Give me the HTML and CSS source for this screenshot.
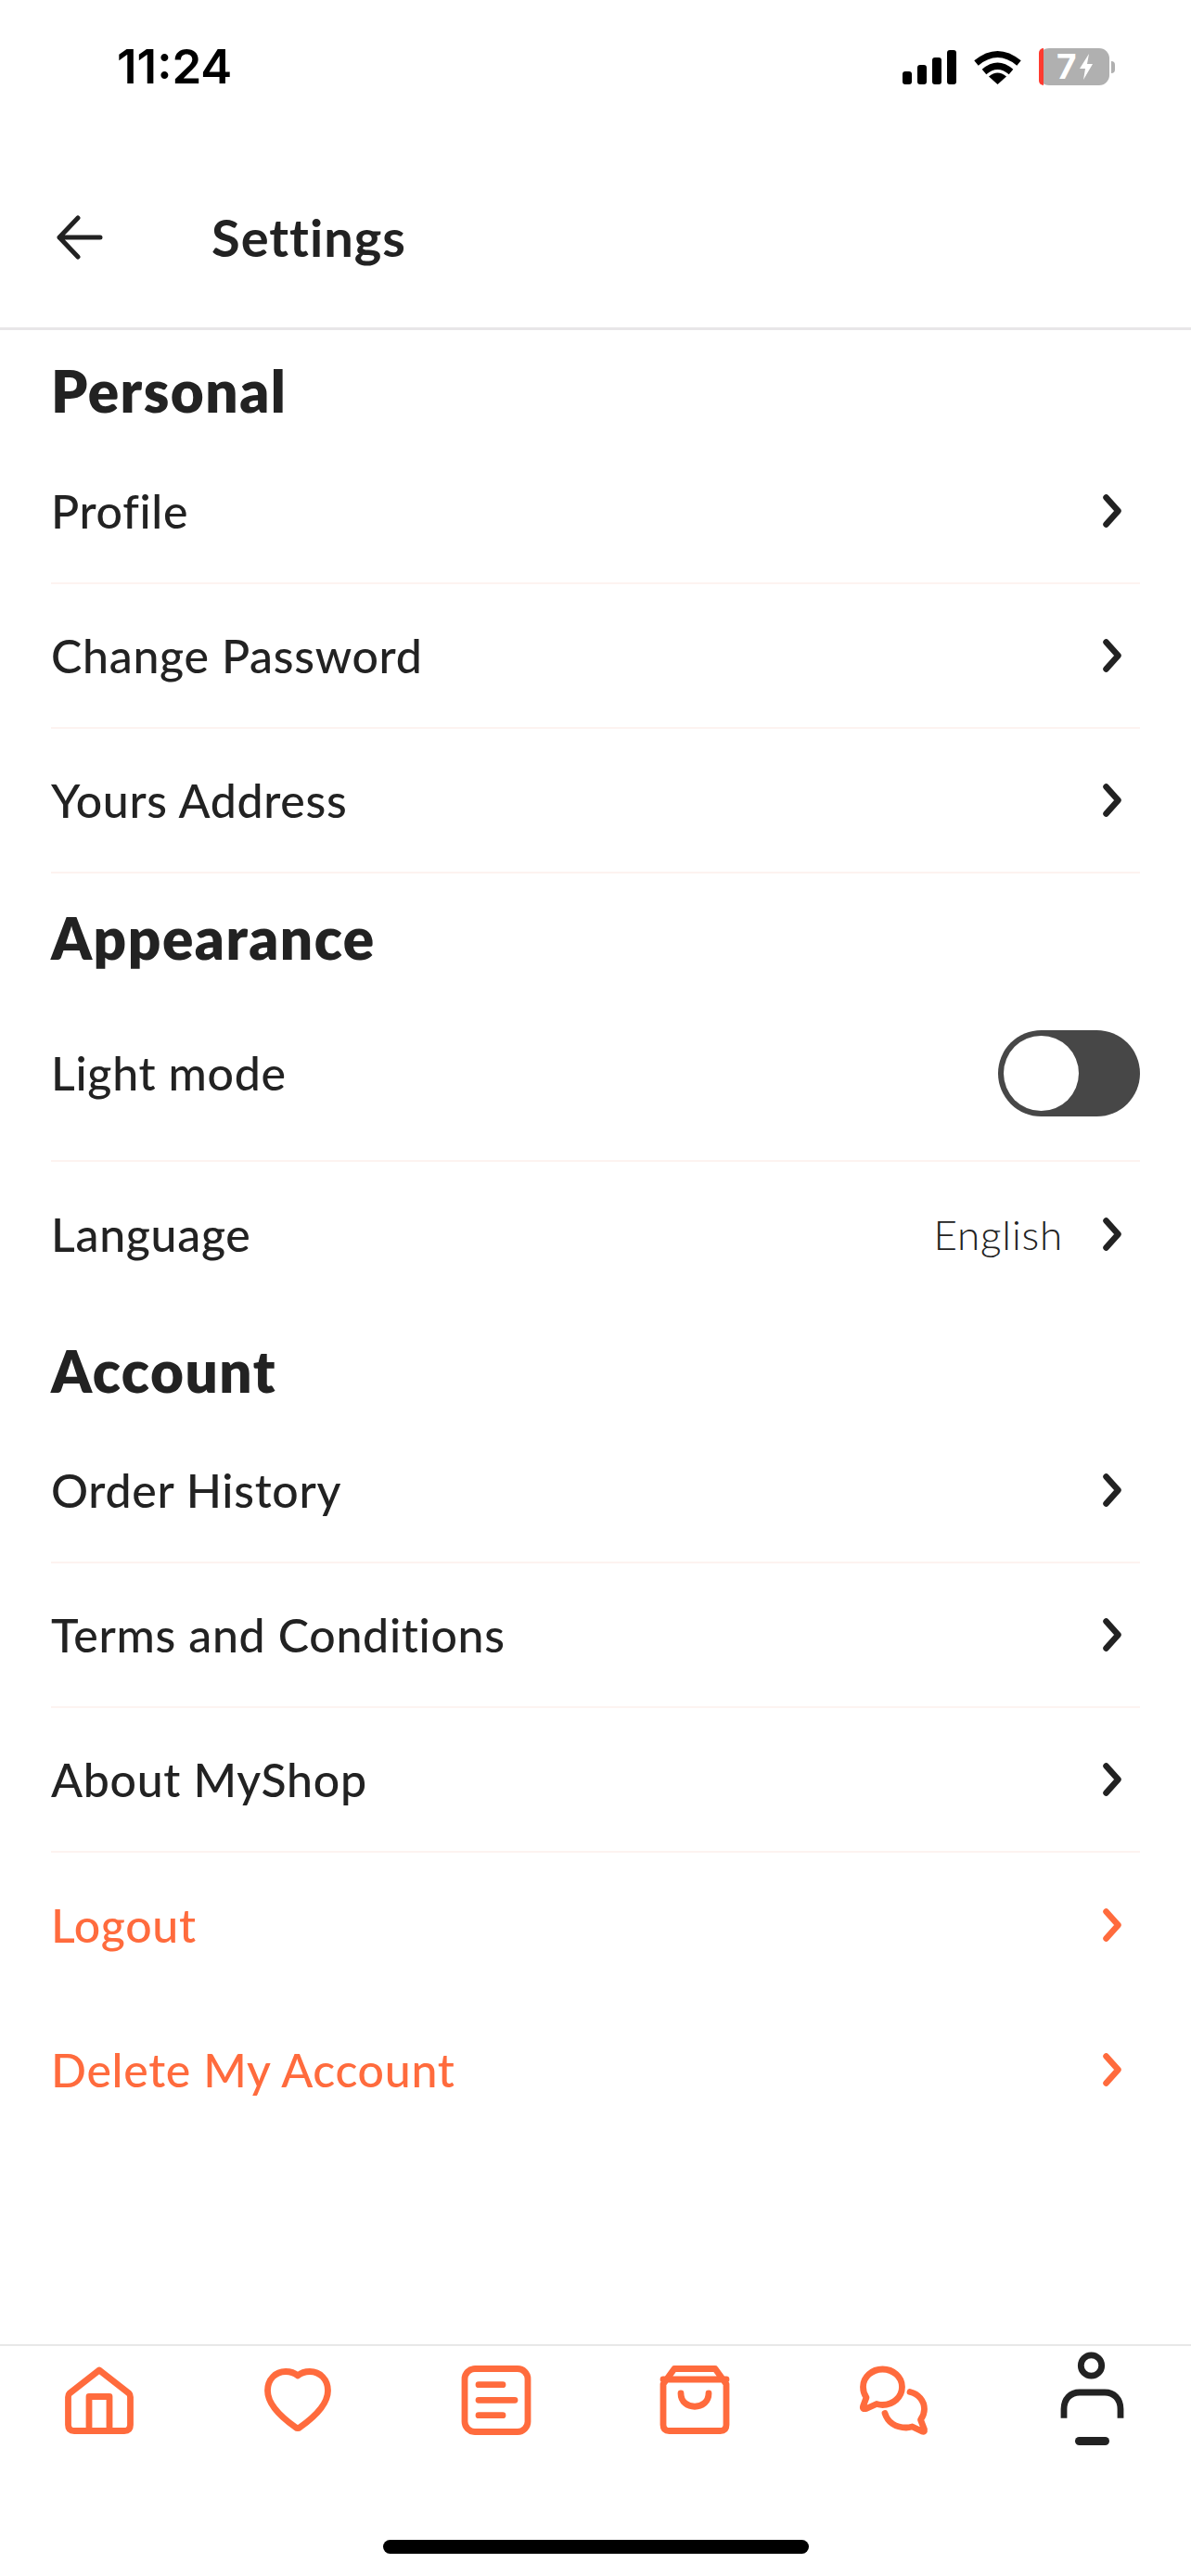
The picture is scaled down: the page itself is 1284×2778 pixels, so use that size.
FILE: index.html
```html
<!DOCTYPE html>
<html lang="en">
<head>
<meta charset="utf-8">
<title>Settings</title>
<link rel="stylesheet" href="styles.css">
</head>
<body>
<div class="screen">
  <div class="status">
    <span class="time">11:24</span>
    <div class="status-icons">
      <div class="signal"><i class="b1"></i><i class="b2"></i><i class="b3"></i><i class="b4"></i></div>
      <svg class="wifi" width="51" height="37" viewBox="0 0 51 37"><path d="M2.5 14 Q25.5 -5 48.5 14" fill="none" stroke="#000" stroke-width="7"/><path d="M11 23.5 Q25.5 11 40 23.5" fill="none" stroke="#000" stroke-width="7"/><path d="M25.5 37 L16 28.5 Q25.5 20.5 35 28.5 Z" fill="#000"/></svg>
      <div class="battery"><div class="cell"><span class="level"></span><span class="pct">7</span><svg width="16" height="28" viewBox="0 0 16 28"><path d="M11 0 L1 16 H7 L5 28 L15 11 H9 Z" fill="#fff"/></svg></div><span class="nub"></span></div>
    </div>
  </div>
  <header class="header">
    <svg class="back" width="52" height="52" viewBox="0 0 52 52"><path d="M49 26 H5 M25 5 L5 26 L25 47" fill="none" stroke="#222" stroke-width="5" stroke-linecap="round" stroke-linejoin="round"/></svg>
    <h1 class="title">Settings</h1>
  </header>
  <main class="content">
    <h2 class="heading heading-first">Personal</h2>
    <a class="row"><span>Profile</span><svg class="chev" viewBox="0 0 20 36"><path d="M3.5 3.5 L16.5 18 L3.5 32.5"/></svg></a>
    <a class="row"><span>Change Password</span><svg class="chev" viewBox="0 0 20 36"><path d="M3.5 3.5 L16.5 18 L3.5 32.5"/></svg></a>
    <a class="row"><span>Yours Address</span><svg class="chev" viewBox="0 0 20 36"><path d="M3.5 3.5 L16.5 18 L3.5 32.5"/></svg></a>
    <h2 class="heading">Appearance</h2>
    <div class="row row-tall"><span>Light mode</span><div class="toggle"><span class="knob"></span></div></div>
    <a class="row row-plain"><span>Language</span><span class="right"><span class="value">English</span><svg class="chev" viewBox="0 0 20 36"><path d="M3.5 3.5 L16.5 18 L3.5 32.5"/></svg></span></a>
    <h2 class="heading">Account</h2>
    <a class="row"><span>Order History</span><svg class="chev" viewBox="0 0 20 36"><path d="M3.5 3.5 L16.5 18 L3.5 32.5"/></svg></a>
    <a class="row"><span>Terms and Conditions</span><svg class="chev" viewBox="0 0 20 36"><path d="M3.5 3.5 L16.5 18 L3.5 32.5"/></svg></a>
    <a class="row"><span>About MyShop</span><svg class="chev" viewBox="0 0 20 36"><path d="M3.5 3.5 L16.5 18 L3.5 32.5"/></svg></a>
    <a class="row row-plain danger"><span>Logout</span><svg class="chev" viewBox="0 0 20 36"><path d="M3.5 3.5 L16.5 18 L3.5 32.5"/></svg></a>
    <a class="row row-plain danger"><span>Delete My Account</span><svg class="chev" viewBox="0 0 20 36"><path d="M3.5 3.5 L16.5 18 L3.5 32.5"/></svg></a>
  </main>
  <nav class="tabs">
    <svg class="tab" viewBox="0 0 100 110"><path d="M50 23 L82 48 Q83.5 49.5 83.5 52 V82 Q83.5 88.5 77 88.5 H23 Q16.5 88.5 16.5 82 V52 Q16.5 49.5 18 48 Z"/><path d="M39 88 V51.5 H61 V88"/></svg>
    <svg class="tab" viewBox="0 0 100 110"><path d="M50 29 C54 25.5 58 24.5 63 24.5 C74 24.5 82.5 33 82.5 45 C82.5 60 66 75 52.5 84.5 Q50 86.5 47.5 84.5 C34 75 17.5 60 17.5 45 C17.5 33 26 24.5 37 24.5 C42 24.5 46 25.5 50 29 Z"/></svg>
    <svg class="tab" viewBox="0 0 100 110"><rect x="16" y="21.5" width="68" height="68" rx="11"/><path d="M31 38.7 H57 M31 55.3 H70 M31 71.7 H57"/></svg>
    <svg class="tab" viewBox="0 0 100 110"><path d="M28 21.5 H72 L84 38 V82 Q84 88.5 77.5 88.5 H22.5 Q16 88.5 16 82 V38 Z M16 33 H84"/><path d="M35 48 C35 67 65 67 65 48"/></svg>
    <svg class="tab" viewBox="0 0 100 110"><path d="M38.5 22 C50 22 59.5 30.5 59.5 41 C59.5 52 50 60.5 38.5 60.5 C36 60.5 34 60 32 59.5 L21 64.5 Q16.5 65.5 17.5 62 L21 52.5 C18.5 49 17.5 45 17.5 41 C17.5 30.5 27 22 38.5 22 Z"/><path d="M68 46.5 C77 48.5 83.5 56 83.5 65 C83.5 69 82 73 79.5 76.5 L83.5 87 Q84 90 81 89 L70.5 84 C68.5 84.5 66.5 85 64 85 C52 85 44 79 41 69.5"/></svg>
    <svg class="tab tab-active" viewBox="0 0 100 110"><circle cx="49.5" cy="18" r="11.2"/><path d="M20 74.7 V65 C20 54 27 47 37 47 H64 C74 47 81 54 81 65 V74.7"/><path class="bar" d="M36.5 99.5 H64.5"/></svg>
  </nav>
  <div class="home-wrap"><span class="home"></span></div>
</div>
</body>
</html>
```

FILE: styles.css
```css
* { box-sizing: border-box; }
html, body { margin: 0; padding: 0; background: #fff; }
.screen {
  width: 1284px;
  height: 2778px;
  display: flex;
  flex-direction: column;
  font-family: "Lato", "Liberation Sans", sans-serif;
  color: #222;
  overflow: hidden;
}
.status {
  height: 144px;
  padding: 44px 82px 0 126px;
  display: flex;
  justify-content: space-between;
  align-items: flex-start;
}
.time {
  font-family: "Inter", "Liberation Sans", sans-serif;
  font-size: 51px;
  font-weight: 600;
  line-height: 56px;
  color: #000;
}
.status-icons { display: flex; align-items: flex-start; padding-top: 8px; }
.signal { display: flex; align-items: flex-end; gap: 6px; height: 37px; margin-top: 2px; }
.signal i { width: 10px; border-radius: 3px; background: #000; display: block; }
.b1 { height: 14px; }
.b2 { height: 21px; }
.b3 { height: 29px; }
.b4 { height: 37px; }
.wifi { margin: 2px 0 0 19px; }
.battery { display: flex; align-items: center; margin-left: 19px; }
.cell {
  width: 76px;
  height: 40px;
  border-radius: 11px;
  background: #b0b0b0;
  display: flex;
  align-items: center;
}
.level { width: 5px; height: 40px; background: #ff3b30; border-radius: 11px 0 0 11px; }
.pct {
  margin-left: 14px;
  color: #fff;
  font-family: "Inter", sans-serif;
  font-size: 37px;
  font-weight: 700;
  line-height: 40px;
  width: 24px;
}
.nub { width: 4px; height: 13px; margin-left: 2px; border-radius: 0 6px 6px 0; background: #b0b0b0; }
.header {
  height: 212px;
  padding: 14px 0 0 59px;
  border-bottom: 3px solid #e8e6e8;
  display: flex;
  align-items: center;
}
.back { flex: none; }
.title { margin: 0 0 0 117px; font-size: 56px; font-weight: 700; letter-spacing: 1px; line-height: 64px; }
.content { flex: 1; padding: 0 55px; }
.heading {
  margin: 0;
  height: 121px;
  padding-top: 37px;
  font-size: 62px;
  font-weight: 800;
  letter-spacing: 1.5px;
  line-height: 64px;
}
.heading-first { height: 118px; padding-top: 33px; }
.row {
  height: 156px;
  display: flex;
  align-items: center;
  justify-content: space-between;
  border-bottom: 2px solid #fdf3f0;
  font-size: 50px;
  font-weight: 500;
  letter-spacing: 0.7px;
  color: #222;
}
.row-tall { height: 190px; }
.row-plain { border-bottom: 0; }
.danger { color: #ff6b3d; }
.right { display: flex; align-items: center; }
.value { font-size: 44px; font-weight: 300; letter-spacing: 0.8px; color: #222; margin-right: 43px; }
.chev {
  width: 20px;
  height: 36px;
  margin-right: 20px;
  fill: none;
  stroke: #222;
  stroke-width: 6.5;
  stroke-linecap: round;
  stroke-linejoin: round;
}
.danger .chev { stroke: #ff6b3d; }
.toggle {
  width: 153px;
  height: 93px;
  padding: 6px;
  border-radius: 47px;
  background: #474747;
}
.knob { display: block; width: 81px; height: 81px; border-radius: 50%; background: #fff; }
.tabs {
  height: 211px;
  padding-top: 3px;
  border-top: 2px solid #e8e8e8;
  display: grid;
  grid-template-columns: repeat(6, 1fr);
  justify-items: center;
  align-items: start;
}
.tab {
  width: 100px;
  height: 110px;
  fill: none;
  stroke: #ff6b3d;
  stroke-width: 6.8;
  stroke-linejoin: round;
  stroke-linecap: round;
}
.tab-active { stroke: #222; stroke-linecap: butt; }
.tab-active .bar { stroke-width: 9; stroke-linecap: round; }
.home-wrap { height: 39px; display: flex; justify-content: center; }
.home { width: 459px; height: 15px; border-radius: 8px; background: #000; }
```
